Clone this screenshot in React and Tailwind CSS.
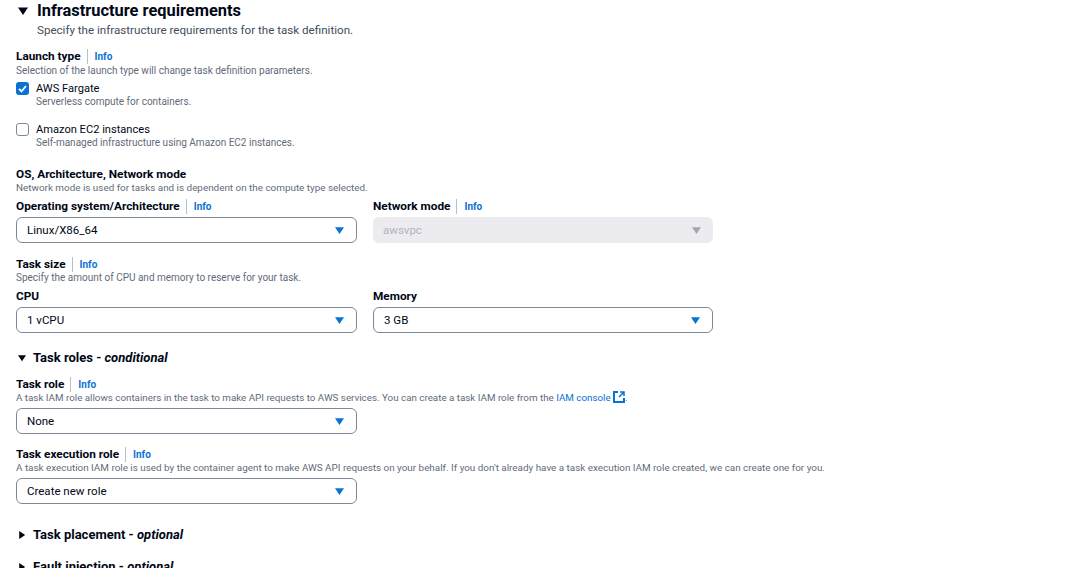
function Caret({ open, className }) {
  return (
    <svg viewBox="0 0 10 10" className={className}>
      {open ? <path d="M0 1.5h10L5 9z" fill="currentColor" /> : <path d="M1.5 0v10L9 5z" fill="currentColor" />}
    </svg>
  );
}

function Info() {
  return (
    <span className="ml-[6px] border-l border-[#b6bec9] pl-[7px] pt-[1px] text-[10px] font-bold leading-[14px] text-[#0972d3]">
      Info
    </span>
  );
}

function Label({ children, info }) {
  return (
    <div className="flex items-center h-[14px] text-[11.8px] font-bold leading-[14px] text-[#000716]">
      <span>{children}</span>
      {info && <Info />}
    </div>
  );
}

function Hint({ children }) {
  return <p className="text-[10px] leading-[13px] text-[#5f6b7a]">{children}</p>;
}

function Select({ value, disabled, narrow }) {
  return (
    <div
      className={
        disabled
          ? 'flex h-[26px] w-[340px] items-center justify-between rounded-[6px] bg-[#ebebf0] pl-[10px] pr-[12px] text-[11.5px] text-[#b4b4bb]'
          : narrow
            ? 'flex h-[26px] w-[340px] items-center justify-between rounded-[6px] border border-[#7d8998] bg-white pl-[10px] pr-[12px] text-[11.5px] text-[#000716]'
            : 'flex h-[26px] w-[341px] items-center justify-between rounded-[6px] border border-[#7d8998] bg-white pl-[10px] pr-[12px] text-[11.5px] text-[#000716]'
      }
    >
      <span className="pt-[2px]">{value}</span>
      <Caret open className={disabled ? 'h-[9px] w-[9px] text-[#a5a5ad]' : 'h-[9px] w-[9px] text-[#0972d3]'} />
    </div>
  );
}

function Option({ checked, title, hint }) {
  return (
    <div className="flex items-start">
      <div
        className={
          checked
            ? 'mt-[1px] flex h-[13px] w-[13px] items-center justify-center rounded-[3px] bg-[#0972d3]'
            : 'mt-[1px] h-[13px] w-[13px] rounded-[3px] border border-[#7d8998] bg-white'
        }
      >
        {checked && (
          <svg viewBox="0 0 13 13" className="h-[13px] w-[13px]">
            <path d="M3 6.8l2.5 2.5L10 4" fill="none" stroke="white" strokeWidth="1.8" />
          </svg>
        )}
      </div>
      <div className="ml-[7px]">
        <div className="h-[14px] text-[11.1px] leading-[15px] text-[#000716]">{title}</div>
        <Hint>{hint}</Hint>
      </div>
    </div>
  );
}

function SubHeader({ open, name, note, className }) {
  return (
    <div className={`flex items-center text-[13px] font-bold leading-[18px] text-[#000716] ${className}`}>
      <Caret open={open} className="ml-[2px] mr-[7px] h-[8px] w-[8px]" />
      <span>
        {name} - <em className="font-bold">{note}</em>
      </span>
    </div>
  );
}

export default function App() {
  return (
    <div
      className="h-[568px] w-[1087px] overflow-hidden bg-white pl-[16px]"
      style={{ fontFamily: 'Roboto, sans-serif' }}
    >
      <div className="flex h-[20px] items-center pt-[2px] text-[16.4px] font-bold leading-[20px] text-[#000716]">
        <Caret open className="ml-[2px] mr-[9px] h-[10px] w-[10px]" />
        <span>Infrastructure requirements</span>
      </div>
      <p className="ml-[21px] mt-[2px] h-[16px] text-[11.6px] leading-[16px] text-[#414d5c]">
        Specify the infrastructure requirements for the task definition.
      </p>

      <div className="mt-[11px]">
        <Label info>Launch type</Label>
        <div className="mt-[1px]">
          <Hint>Selection of the launch type will change task definition parameters.</Hint>
        </div>
      </div>
      <div className="mt-[4px]">
        <Option checked title="AWS Fargate" hint="Serverless compute for containers." />
      </div>
      <div className="mt-[14px]">
        <Option title="Amazon EC2 instances" hint="Self-managed infrastructure using Amazon EC2 instances." />
      </div>

      <div className="mt-[18px]">
        <Label>OS, Architecture, Network mode</Label>
        <p className="text-[9.9px] leading-[13px] text-[#5f6b7a]">
          Network mode is used for tasks and is dependent on the compute type selected.
        </p>
      </div>
      <div className="mt-[5px] flex gap-[16px]">
        <div>
          <Label info>Operating system/Architecture</Label>
          <div className="mt-[4px]">
            <Select value="Linux/X86_64" />
          </div>
        </div>
        <div>
          <Label info>Network mode</Label>
          <div className="mt-[4px]">
            <Select value="awsvpc" disabled />
          </div>
        </div>
      </div>

      <div className="mt-[14px]">
        <Label info>Task size</Label>
        <Hint>Specify the amount of CPU and memory to reserve for your task.</Hint>
      </div>
      <div className="mt-[5px] flex gap-[16px]">
        <div>
          <Label>CPU</Label>
          <div className="mt-[4px]">
            <Select value="1 vCPU" />
          </div>
        </div>
        <div>
          <Label>Memory</Label>
          <div className="mt-[4px]">
            <Select value="3 GB" narrow />
          </div>
        </div>
      </div>

      <SubHeader open name="Task roles" note="conditional" className="mt-[16px]" />

      <div className="mt-[10px]">
        <Label info>Task role</Label>
        <p className="text-[9.8px] leading-[13px] text-[#5f6b7a]">
          A task IAM role allows containers in the task to make API requests to AWS services. You can create a task IAM role from the{' '}
          <span className="text-[#0972d3]">IAM console</span>{' '}
          <svg viewBox="0 0 12 12" className="inline h-[12px] w-[12px] align-[-2px] text-[#0972d3]" fill="none" stroke="currentColor" strokeWidth="2">
            <path d="M5 1H1v10h10V7" />
            <path d="M7 1h4v4M11 1L6 6" strokeWidth="1.5" />
          </svg>
          .
        </p>
      </div>
      <div className="mt-[4px]">
        <Select value="None" />
      </div>

      <div className="mt-[13px]">
        <Label info>Task execution role</Label>
        <p className="text-[9.9px] leading-[13px] text-[#5f6b7a]">
          A task execution IAM role is used by the container agent to make AWS API requests on your behalf. If you don't already have a task execution IAM role created, we can create one for you.
        </p>
      </div>
      <div className="mt-[4px]">
        <Select value="Create new role" />
      </div>

      <SubHeader name="Task placement" note="optional" className="mt-[22px]" />
      <SubHeader name="Fault injection" note="optional" className="mt-[14px]" />
    </div>
  );
}
